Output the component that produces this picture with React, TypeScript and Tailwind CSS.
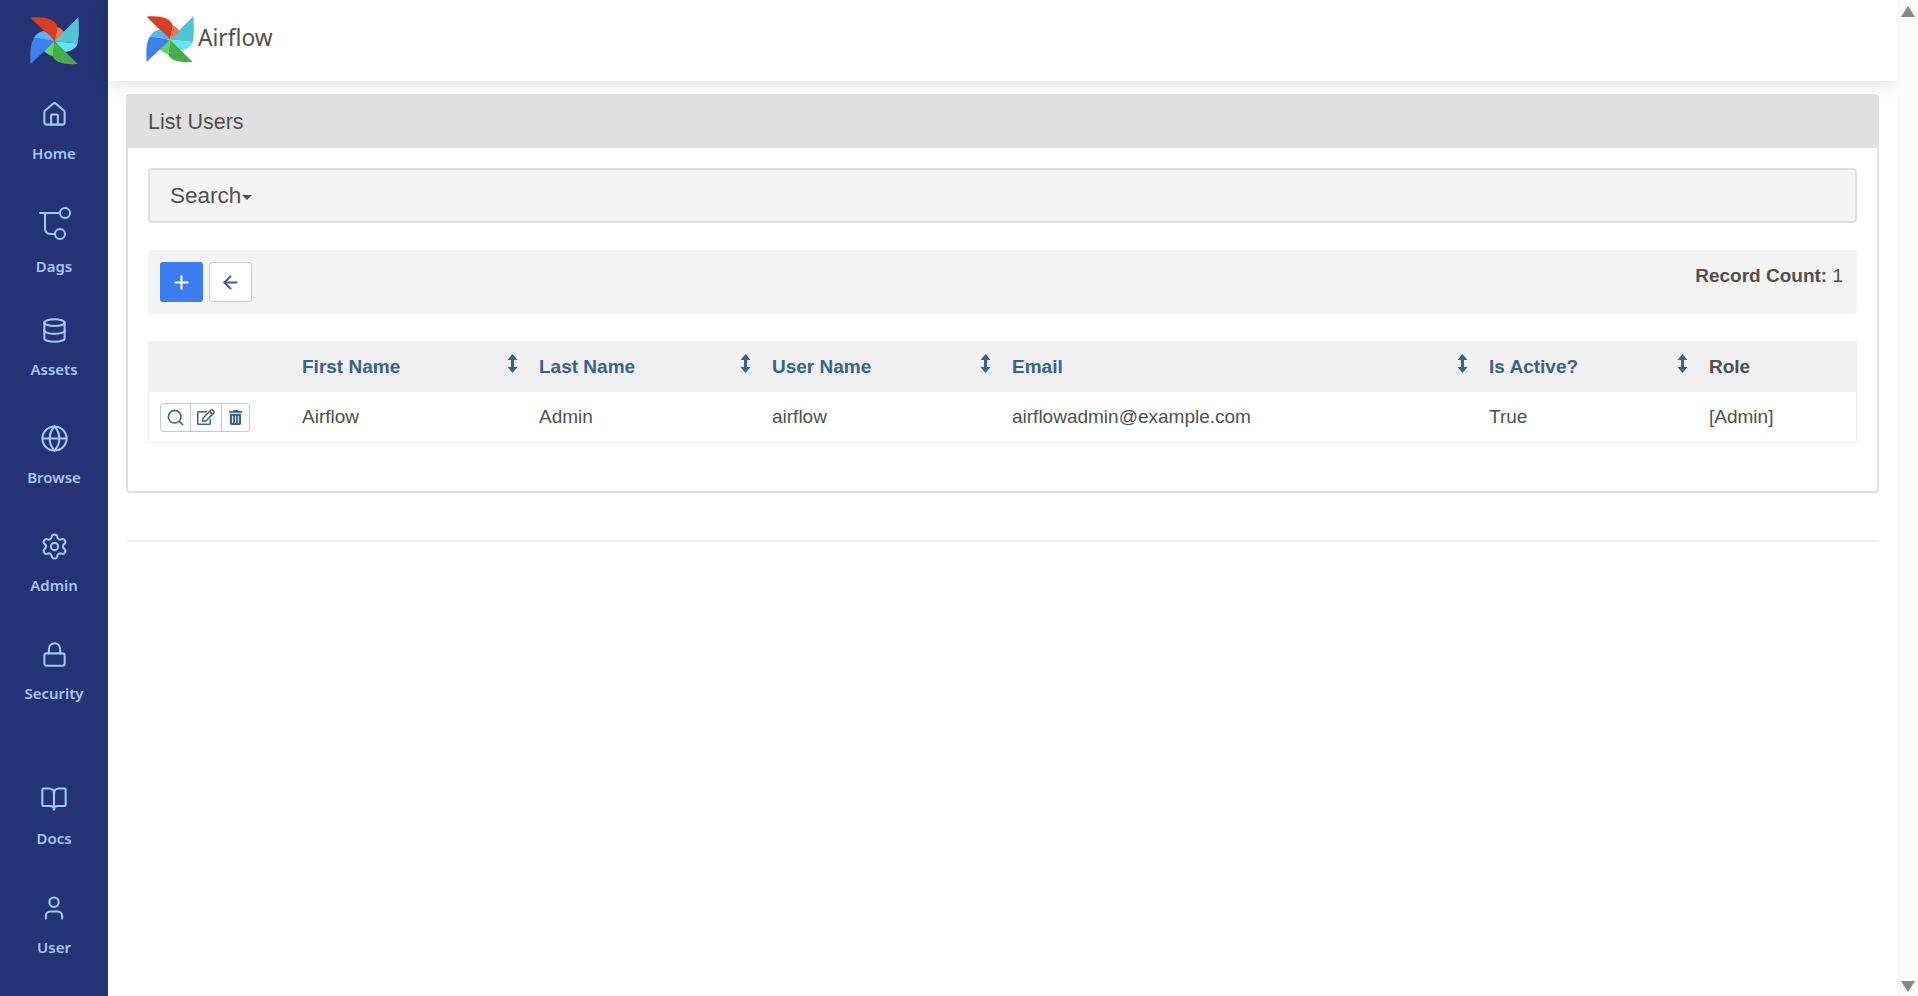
import { ArrowLeft, BookOpen, Database, Globe, House, Lock, Plus, Search, Settings, User } from 'lucide-react';
import type { ReactNode } from 'react';
import { FaRegEdit, FaTrashAlt } from 'react-icons/fa';

function Pinwheel({ className }: Readonly<{ className?: string }>) {
  return (
    <svg viewBox="90 45 146 146" className={className}>
      <path d="M92 50C130 46 165 52 172 78L163 120Z" fill="#d93f1d" />
      <path d="M172 78C183 82 193 90 191 100C182 110 172 115 163 120Z" fill="#f0744f" />
      <path d="M234 48L163 120L232 127C237 100 236 70 234 48Z" fill="#50c4d6" />
      <path d="M163 120C175 130 184 148 192 152C210 152 228 142 232 127Z" fill="#61e3f3" />
      <path d="M232 188L163 120L158 165C165 185 195 190 232 188Z" fill="#47ad48" />
      <path d="M163 120C145 125 130 140 132 150C140 158 150 162 158 165Z" fill="#5fd75a" />
      <path d="M92 188L163 120L102 110C90 130 90 160 92 188Z" fill="#3b82f0" />
      <path d="M163 120C150 105 140 92 130 90C118 92 108 100 102 110Z" fill="#57b4f8" />
    </svg>
  );
}

function DagsIcon() {
  return (
    <svg width="34" height="34" viewBox="0 0 34 34" fill="none" stroke="currentColor" strokeWidth="2" strokeLinecap="round" className="-my-[5px] translate-x-[1px] translate-y-[2px]">
      <path d="M2 6H22" />
      <circle cx="27" cy="6" r="5" />
      <path d="M7 6V21C7 25 9 27 13 27H17" />
      <circle cx="22" cy="27" r="5" />
    </svg>
  );
}

function SortIcon() {
  return (
    <svg width="11" height="19" viewBox="0 0 11 19" className="-mt-[9px] mr-[9px] shrink-0 text-[#39638f]" fill="currentColor">
      <path d="M5.5 0L10.5 6H7V13H10.5L5.5 19L.5 13H4V6H.5Z" />
    </svg>
  );
}

function NavItem({ icon, label, className, labelClass }: Readonly<{ icon: ReactNode; label: string; className?: string; labelClass?: string }>) {
  return (
    <div className={`flex flex-col items-center ${className ?? 'h-[108px]'}`}>
      <div className="flex h-6 items-center justify-center">{icon}</div>
      <span className={`h-5 text-[15px] leading-5 font-semibold ${labelClass ?? 'mt-[17px]'}`}>{label}</span>
    </div>
  );
}

const columns = [
  { title: '', value: '' },
  { title: 'First Name', value: 'Airflow' },
  { title: 'Last Name', value: 'Admin' },
  { title: 'User Name', value: 'airflow' },
  { title: 'Email', value: 'airflowadmin@example.com' },
  { title: 'Is Active?', value: 'True' },
  { title: 'Role', value: '[Admin]' },
];

export default function App() {
  return (
    <div className="flex h-[996px] w-full overflow-hidden bg-white font-['Liberation_Sans',sans-serif] text-[19px] text-[#51504f]">
      <aside className="flex h-full w-[108px] shrink-0 flex-col bg-[#243373] font-['Noto_Sans',sans-serif] text-[#a6c6f7]">
        <div className="flex h-[102px] shrink-0 justify-center pt-[16px]">
          <Pinwheel className="h-[49px] w-[49px]" />
        </div>
        <NavItem icon={<House size={27} strokeWidth={1.8} />} label="Home" />
        <NavItem icon={<DagsIcon />} label="Dags" labelClass="mt-[22px]" />
        <NavItem icon={<Database size={27} strokeWidth={1.8} />} label="Assets" />
        <NavItem icon={<Globe size={29} strokeWidth={1.7} />} label="Browse" />
        <NavItem icon={<Settings size={29} strokeWidth={1.7} />} label="Admin" />
        <NavItem icon={<Lock size={27} strokeWidth={1.8} />} label="Security" />
        <div className="mt-auto">
          <NavItem icon={<BookOpen size={28} strokeWidth={1.8} />} label="Docs" className="h-[109px]" />
          <NavItem icon={<User size={28} strokeWidth={1.8} />} label="User" className="h-[100px]" />
        </div>
      </aside>

      <div className="flex min-w-0 flex-1 flex-col">
        <header className="flex h-[81px] shrink-0 items-center bg-white pl-[38px] shadow-[0_4px_16px_rgba(0,0,0,0.12)]">
          <Pinwheel className="mb-[4px] h-[48px] w-[48px]" />
          <span className="mb-[4px] ml-[4px] font-['Noto_Sans',sans-serif] text-[22.7px] text-[#51504f]">Airflow</span>
        </header>

        <main className="px-[18px] pt-[13px]">
          <section className="h-[399px] rounded-[4px] border-2 border-[#e0e0e0]">
            <h2 className="flex h-[52px] items-center bg-[#e0e0e0] pt-[2px] pl-[20px] text-[21.5px] leading-none">List Users</h2>
            <div className="px-[20px] pt-[20px]">
              <div className="flex h-[55px] items-center rounded-[4px] border-2 border-[#e0e0e0] bg-[#f4f4f4] pl-[20px] text-[22.5px]">
                Search
                <span className="mt-[3px] ml-[1px] h-0 w-0 border-x-[5px] border-t-[5px] border-x-transparent border-t-[#51504f]" />
              </div>

              <div className="mt-[27px] flex h-[64px] justify-between rounded-[4px] bg-[#f4f4f4] px-[12px] pt-[12px]">
                <div className="flex gap-[6px]">
                  <button className="flex h-[40px] w-[43px] items-center justify-center rounded-[3px] bg-[#3b7df0] text-white">
                    <Plus size={21} strokeWidth={2.4} />
                  </button>
                  <button className="flex h-[40px] w-[43px] items-center justify-center rounded-[3px] border border-[#cccccc] bg-white text-[#39638f]">
                    <ArrowLeft size={21} strokeWidth={2.2} />
                  </button>
                </div>
                <p className="mr-[2px]">
                  <b>Record Count:</b> 1
                </p>
              </div>

              <table className="mt-[27px] w-full table-fixed border-separate border-spacing-0">
                <colgroup>
                  <col className="w-[142px]" />
                  <col className="w-[237px]" />
                  <col className="w-[233px]" />
                  <col className="w-[240px]" />
                  <col className="w-[477px]" />
                  <col className="w-[220px]" />
                  <col className="w-[160px]" />
                </colgroup>
                <thead>
                  <tr className="h-[51px] bg-[#f0f0f0]">
                    {columns.map((col, index) => (
                      <th key={col.title} className="p-0 pt-[2px] pl-[12px] text-left">
                        {col.title && (
                          <div className="flex items-center justify-between">
                            <span className={index === 6 ? 'text-[#51504f]' : 'text-[#39638f]'}>{col.title}</span>
                            {index > 0 && index < 6 && <SortIcon />}
                          </div>
                        )}
                      </th>
                    ))}
                  </tr>
                </thead>
                <tbody>
                  <tr className="h-[51px]">
                    <td className="border-b border-l border-[#eeeeee] p-0 pl-[11px]">
                      <div className="flex h-[29px] w-[90px] rounded-[3px] border border-[#c8c8c8] text-[#39638f]">
                        <span className="flex w-[30px] items-center justify-center border-r border-[#c8c8c8]">
                          <Search size={19} strokeWidth={2} />
                        </span>
                        <span className="flex w-[31px] items-center justify-center border-r border-[#c8c8c8]">
                          <FaRegEdit size={18} />
                        </span>
                        <span className="flex flex-1 items-center justify-center">
                          <FaTrashAlt size={15} />
                        </span>
                      </div>
                    </td>
                    {columns.slice(1).map((col, index) => (
                      <td key={col.title} className={`border-b border-[#eeeeee] p-0 pl-[12px] ${index === 5 ? 'border-r' : ''}`}>{col.value}</td>
                    ))}
                  </tr>
                </tbody>
              </table>
            </div>
          </section>
          <hr className="mt-[47px] border-t-2 border-[#eeeeee]" />
        </main>
      </div>

      <div className="flex w-[21px] shrink-0 flex-col items-center justify-between bg-[#fafafa] pt-[6px] pb-[4px]">
        <span className="h-0 w-0 border-x-[7px] border-b-[11px] border-x-transparent border-b-[#888888]" />
        <span className="h-0 w-0 border-x-[7px] border-t-[11px] border-x-transparent border-t-[#888888]" />
      </div>
    </div>
  );
}
